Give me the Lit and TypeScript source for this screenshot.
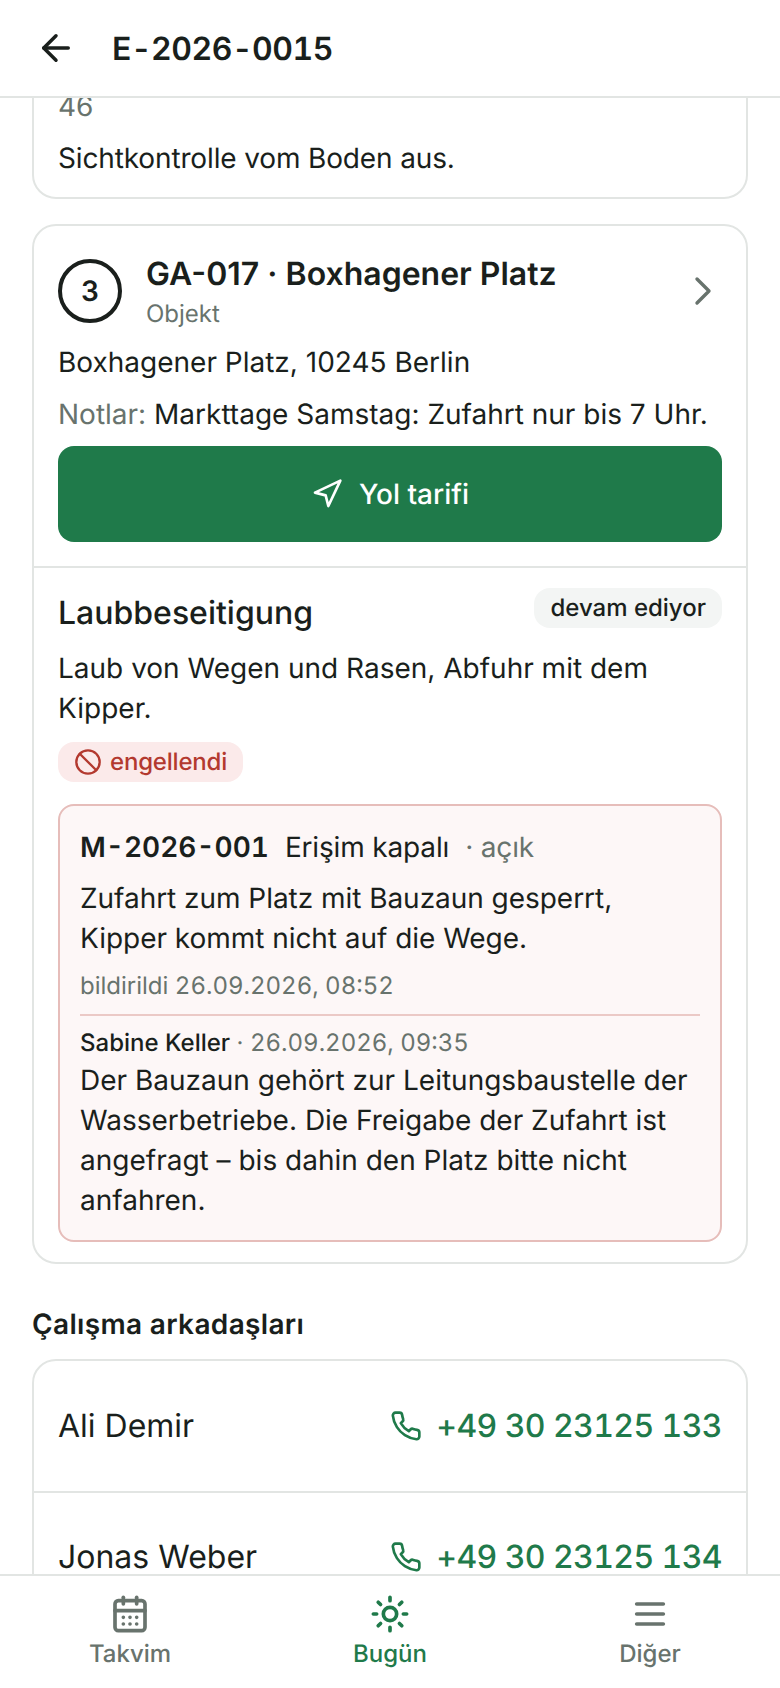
import { LitElement, html, css, svg } from "lit";
import { customElement } from "lit/decorators.js";

const icon = (size: number, sw: number, body: unknown, cls = "") => html`<svg class=${cls} width=${size} height=${size} viewBox="0 0 24 24" fill="none" stroke="currentColor" stroke-width=${sw} stroke-linecap="round" stroke-linejoin="round">${body}</svg>`;

const back = svg`<path d="m12 19-7-7 7-7"/><path d="M19 12H5"/>`;
const chevron = svg`<path d="m9 18 6-6-6-6"/>`;
const nav = svg`<polygon points="3 11 22 2 13 21 11 13 3 11"/>`;
const ban = svg`<circle cx="12" cy="12" r="10"/><path d="m4.9 4.9 14.2 14.2"/>`;
const phone = svg`<path d="M22 16.92v3a2 2 0 0 1-2.18 2 19.79 19.79 0 0 1-8.63-3.07 19.5 19.5 0 0 1-6-6 19.79 19.79 0 0 1-3.07-8.67A2 2 0 0 1 4.11 2h3a2 2 0 0 1 2 1.72 12.84 12.84 0 0 0 .7 2.81 2 2 0 0 1-.45 2.11L8.09 9.91a16 16 0 0 0 6 6l1.27-1.27a2 2 0 0 1 2.11-.45 12.84 12.84 0 0 0 2.81.7A2 2 0 0 1 22 16.92z"/>`;
const calendar = svg`<path d="M8 2v4"/><path d="M16 2v4"/><rect x="3" y="4" width="18" height="18" rx="2"/><path d="M3 10h18"/><path d="M8 14h.01M12 14h.01M16 14h.01M8 18h.01M12 18h.01M16 18h.01"/>`;
const sun = svg`<circle cx="12" cy="12" r="4"/><path d="M12 2v2M12 20v2M4.93 4.93l1.41 1.41M17.66 17.66l1.41 1.41M2 12h2M20 12h2M6.34 17.66l-1.41 1.41M19.07 4.93l-1.41 1.41"/>`;
const menu = svg`<path d="M4 6h16M4 12h16M4 18h16"/>`;

@customElement("app-root")
export class AppRoot extends LitElement {
  static styles = css`
    :host {
      display: flex;
      flex-direction: column;
      height: 1688px;
      background: #fff;
      font-family: Inter, "Noto Sans", sans-serif;
      font-size: 28px;
      line-height: 40px;
      color: #1a1f1c;
      overflow: hidden;
      text-rendering: geometricPrecision;
    }
    svg { display: block; flex: none; }
    .top {
      flex: none;
      height: 98px;
      box-sizing: border-box;
      border-bottom: 2px solid #e2e5e3;
      display: flex;
      align-items: center;
      padding-left: 35px;
      gap: 35px;
      background: #fff;
    }
    .top h1 {
      margin: 2px 0 0;
      font-size: 32px;
      font-weight: 600;
      font-variant-numeric: tabular-nums;
      letter-spacing: -0.5px;
    }
    .scroll { flex: 1; min-height: 0; overflow: hidden; }
    .content {
      margin-top: -36px;
      padding: 0 32px;
      display: flex;
      flex-direction: column;
    }
    .card {
      border: 2px solid #e2e5e3;
      border-radius: 24px;
      background: #fff;
      overflow: hidden;
    }
    .first { padding: 22px 24px 19px; display: flex; flex-direction: column; gap: 12px; margin-bottom: 25px; }
    .tight { letter-spacing: -0.14px; }
    .muted { color: #68736d; }
    .stop { padding: 25px 24px 24px; display: flex; flex-direction: column; }
    .stop-head { display: flex; align-items: center; gap: 24px; }
    .num {
      width: 64px; height: 64px; box-sizing: border-box;
      border: 4px solid #1a1f1c; border-radius: 50%;
      display: flex; align-items: center; justify-content: center;
      font-size: 28px; font-weight: 600; flex: none;
    }
    .stop-title { flex: 1; min-width: 0; }
    .stop-title b { display: block; font-size: 32px; font-weight: 600; line-height: 46px; }
    .stop-title span { display: block; font-size: 24px; line-height: 34px; color: #68736d; }
    .chev { color: #68736d; margin-right: -5px; }
    .addr { margin-top: 11px; }
    .note { margin-top: 12px; white-space: nowrap; }
    .btn {
      margin-top: 12px;
      height: 96px;
      border-radius: 16px;
      background: #1f7a4a;
      color: #fff;
      display: flex; align-items: center; justify-content: center;
      gap: 16px;
      font-weight: 500;
    }
    .task { border-top: 2px solid #e2e5e3; padding: 20px 24px 20px; display: flex; flex-direction: column; }
    .task-head { display: flex; justify-content: space-between; align-items: flex-start; }
    .task-head h2 { margin: 3px 0 0; font-size: 32px; line-height: 44px; font-weight: 500; }
    .pill {
      height: 40px; padding: 0 16px; border-radius: 16px;
      background: #f3f5f4; font-size: 24px; line-height: 40px; font-weight: 500;
    }
    .desc { margin-top: 13px; }
    .blocked {
      align-self: flex-start;
      margin-top: 14px;
      height: 40px; padding: 0 16px; border-radius: 16px;
      background: #fbeaea; color: #b3392f;
      display: flex; align-items: center; gap: 8px;
      font-size: 24px; line-height: 40px; font-weight: 500;
      letter-spacing: -0.2px;
    }
    .issue {
      margin-top: 22px;
      border: 2px solid #e6bdba;
      border-radius: 16px;
      background: #fdf7f7;
      padding: 21px 20px 20px;
    }
    .issue-head { display: flex; align-items: baseline; gap: 16px; }
    .issue-head b { font-weight: 600; font-variant-numeric: tabular-nums; }
    .issue-head span { letter-spacing: -0.16px; }
    .issue-text { margin-top: 11px; letter-spacing: -0.04px; }
    .meta { font-size: 24px; line-height: 34px; margin-top: 11px; color: #68736d; font-variant-numeric: tabular-nums; }
    .comment { margin-top: 11px; border-top: 2px solid #ebc9c6; padding-top: 10px; }
    .who { font-size: 24px; line-height: 34px; color: #68736d; font-variant-numeric: tabular-nums; }
    .who b { font-weight: 500; color: #1a1f1c; }
    .section { margin: 40px 0 15px; font-weight: 600; line-height: 40px; letter-spacing: 0.34px; }
    .row {
      height: 130px; box-sizing: border-box;
      display: flex; align-items: center; justify-content: space-between;
      padding: 0 24px;
      font-size: 32px;
    }
    .row + .row { border-top: 2px solid #e2e5e3; }
    .tel { display: flex; align-items: center; gap: 14px; color: #1f7a4a; font-weight: 500; font-variant-numeric: tabular-nums; letter-spacing: -0.6px; }
    .bar {
      flex: none;
      height: 114px; box-sizing: border-box;
      border-top: 2px solid #e2e5e3;
      display: grid; grid-template-columns: repeat(3, 1fr);
      background: #fff;
    }
    .tab {
      display: flex; flex-direction: column; align-items: center;
      padding-top: 18px;
      color: #68736d;
      font-size: 24px; line-height: 32px; font-weight: 500;
    }
    .tab.on { color: #1f7a4a; }
    .tab span { margin-top: 4px; }
  `;

  render() {
    return html`
      <header class="top">
        ${icon(42, 2, back)}
        <h1>E-2026-0015</h1>
      </header>
      <div class="scroll">
        <div class="content">
          <section class="card first">
            <div class="muted">46</div>
            <div class="tight">Sichtkontrolle vom Boden aus.</div>
          </section>
          <section class="card">
            <div class="stop">
              <div class="stop-head">
                <div class="num">3</div>
                <div class="stop-title">
                  <b>GA-017 · Boxhagener Platz</b>
                  <span>Objekt</span>
                </div>
                ${icon(48, 1.7, chevron, "chev")}
              </div>
              <div class="addr">Boxhagener Platz, 10245 Berlin</div>
              <div class="note"><span class="muted">Notlar:</span> Markttage Samstag: Zufahrt nur bis 7 Uhr.</div>
              <div class="btn">${icon(32, 2, nav)}<span>Yol tarifi</span></div>
            </div>
            <div class="task">
              <div class="task-head">
                <h2>Laubbeseitigung</h2>
                <div class="pill">devam ediyor</div>
              </div>
              <div class="desc">Laub von Wegen und Rasen, Abfuhr mit dem Kipper.</div>
              <div class="blocked">${icon(28, 2, ban)}<span>engellendi</span></div>
              <div class="issue">
                <div class="issue-head">
                  <b>M-2026-001</b>
                  <span>Erişim kapalı</span>
                  <span class="muted">· açık</span>
                </div>
                <div class="issue-text">Zufahrt zum Platz mit Bauzaun gesperrt, Kipper kommt nicht auf die Wege.</div>
                <div class="meta">bildirildi 26.09.2026, 08:52</div>
                <div class="comment">
                  <div class="who"><b>Sabine Keller</b> · 26.09.2026, 09:35</div>
                  <div>Der Bauzaun gehört zur Leitungsbaustelle der Wasserbetriebe. Die Freigabe der Zufahrt ist angefragt – bis dahin den Platz bitte nicht anfahren.</div>
                </div>
              </div>
            </div>
          </section>
          <div class="section">Çalışma arkadaşları</div>
          <section class="card">
            <div class="row"><span>Ali Demir</span><span class="tel">${icon(32, 2, phone)}+49 30 23125 133</span></div>
            <div class="row"><span>Jonas Weber</span><span class="tel">${icon(32, 2, phone)}+49 30 23125 134</span></div>
          </section>
        </div>
      </div>
      <nav class="bar">
        <div class="tab">${icon(40, 2.2, calendar)}<span>Takvim</span></div>
        <div class="tab on">${icon(40, 2.2, sun)}<span>Bugün</span></div>
        <div class="tab">${icon(40, 2.2, menu)}<span>Diğer</span></div>
      </nav>
    `;
  }
}
